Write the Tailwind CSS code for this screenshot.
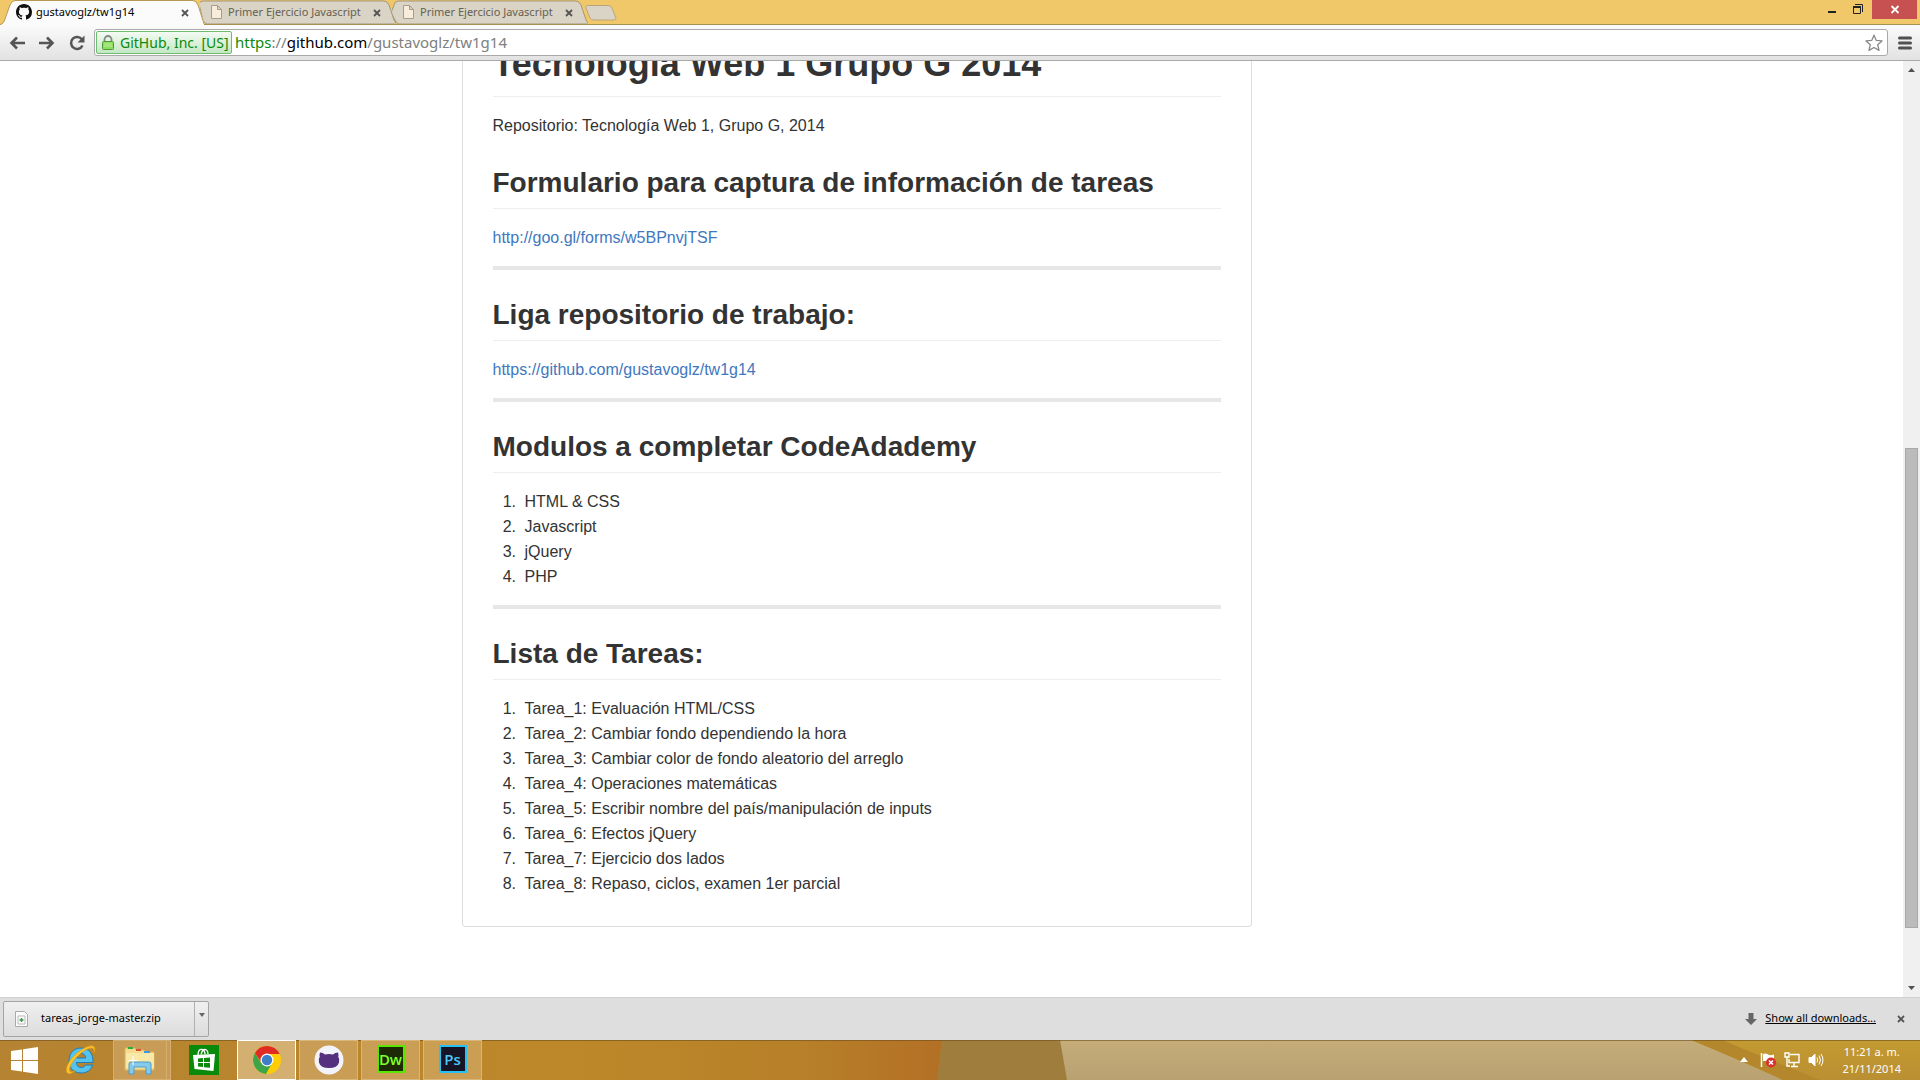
<!DOCTYPE html>
<html lang="es">
<head>
<meta charset="utf-8">
<title>gustavoglz/tw1g14</title>
<script src="https://cdn.jsdelivr.net/npm/@tailwindcss/browser@4"></script>
</head>
<body class="flex h-screen flex-col overflow-hidden bg-white font-['Noto_Sans',sans-serif]">

<!-- Window tabs -->
<header class="relative flex h-6 shrink-0 bg-[#f0c869] text-[11px] leading-6 text-[#665f52]">
  <nav class="flex" aria-label="Pestañas">
    <div class="relative z-20 h-[25px] w-[204px]">
      <svg class="absolute inset-0 h-full w-full" viewBox="0 0 204 25"><path d="M0 25C3 24 4 22 5 19L10 5Q12 1 15 1H193Q196 1 198 5L203 19Q204 23 208 25Z" fill="#fbfbfb"/><path d="M0 24.500C3 24 4 22 5 19L10 5Q12 .5 15 .5H193Q196 .5 198 5L204 24" fill="none" stroke="#b99a55"/></svg>
      <a href="#" class="relative flex items-center pl-4 text-black">
        <svg class="mr-1 h-4 w-4" viewBox="0 0 16 16"><path fill="#111" d="M8 0C3.580 0 0 3.580 0 8c0 3.540 2.290 6.530 5.470 7.590.4.070.55-.17.55-.38 0-.19-.01-.82-.01-1.490-2.010.37-2.530-.49-2.690-.94-.09-.23-.48-.94-.82-1.130-.28-.15-.68-.52-.01-.53.63-.01 1.080.58 1.230.82.72 1.210 1.870.87 2.330.66.070-.52.28-.87.51-1.070-1.780-.2-3.640-.89-3.640-3.950 0-.87.31-1.590.82-2.150-.08-.2-.36-1.020.08-2.120 0 0 .67-.21 2.200.82.64-.18 1.320-.27 2-.27s1.360.09 2 .27c1.530-1.040 2.200-.82 2.200-.82.44 1.100.16 1.920.08 2.120.51.56.82 1.270.82 2.150 0 3.070-1.870 3.750-3.650 3.950.29.25.54.73.54 1.480 0 1.070-.01 1.930-.01 2.200 0 .21.15.46.55.38A8.010 8.010 0 0 0 16 8c0-4.420-3.580-8-8-8z"/></svg>
        gustavoglz/tw1g14
      </a>
      <button class="absolute top-[9px] left-[181px]" aria-label="Cerrar"><svg class="h-2 w-2" viewBox="0 0 8 8"><path d="M1 1l6 6M7 1L1 7" stroke="#555" stroke-width="1.800"/></svg></button>
    </div>
    <div class="relative z-10 -ml-1 h-6 w-[196px]">
      <svg class="absolute inset-0 h-full w-full" viewBox="0 0 196 24"><path d="M-1 4Q0 1 3 1H184Q187 1 189 5L194 20Q195 23 198 24H7Q4 23 3 20Z" fill="#d9d4c6" stroke="#a4977a"/></svg>
      <a href="#" class="relative flex items-center pl-[11px]">
        <svg class="mr-[6px] h-[14px] w-[11px]" viewBox="0 0 11 14"><path d="M.5.5h6l4 4v9H.5zM6.500.5v4h4" fill="#f8eddb" stroke="#a99b85"/></svg>
        Primer Ejercicio Javascript
      </a>
      <button class="absolute top-[9px] left-[173px]" aria-label="Cerrar"><svg class="h-2 w-2" viewBox="0 0 8 8"><path d="M1 1l6 6M7 1L1 7" stroke="#555" stroke-width="1.800"/></svg></button>
    </div>
    <div class="relative -ml-1 h-6 w-[196px]">
      <svg class="absolute inset-0 h-full w-full" viewBox="0 0 196 24"><path d="M-1 13L2 5Q3 1 6 1H184Q187 1 189 5L194 20Q195 23 198 24H7Q4 23 3 20Z" fill="#d9d4c6" stroke="#a4977a"/></svg>
      <a href="#" class="relative flex items-center pl-[11px]">
        <svg class="mr-[6px] h-[14px] w-[11px]" viewBox="0 0 11 14"><path d="M.5.5h6l4 4v9H.5zM6.500.5v4h4" fill="#f8eddb" stroke="#a99b85"/></svg>
        Primer Ejercicio Javascript
      </a>
      <button class="absolute top-[9px] left-[173px]" aria-label="Cerrar"><svg class="h-2 w-2" viewBox="0 0 8 8"><path d="M1 1l6 6M7 1L1 7" stroke="#555" stroke-width="1.800"/></svg></button>
    </div>
    <button class="-ml-1 mt-[5px] self-start" aria-label="Nueva pestaña"><svg class="h-4 w-9" viewBox="0 0 36 16"><path d="M3 .5H24Q27 .5 28 3L32 13Q32 15 30 15H10Q7 15 6 13L2 3Q1 1 3 .5Z" fill="#d9d4c6" stroke="#b9a67c"/></svg></button>
  </nav>
  <div class="ml-auto flex items-start">
    <button class="w-6" aria-label="Minimizar"><svg class="h-5 w-6" viewBox="0 0 24 20"><path d="M8 11h8v2H8z" fill="#222"/></svg></button>
    <button class="ml-[2px] w-6" aria-label="Restaurar"><svg class="h-5 w-6" viewBox="0 0 24 20"><path d="M7 6h8v2H7z" fill="#222"/><path d="M7.500 6.500h7v7h-7zM9 4.500h7.500V12" fill="none" stroke="#222"/></svg></button>
    <button class="ml-[2px] h-[19px] w-[45px] bg-[#c75050]" aria-label="Cerrar ventana"><svg class="h-full w-full" viewBox="0 0 45 19"><path d="M19.500 6l7 7M26.500 6l-7 7" stroke="#fff" stroke-width="1.800"/></svg></button>
    <span class="w-[3px]"></span>
  </div>
</header>

<!-- Toolbar -->
<div class="relative z-10 flex h-[37px] shrink-0 items-center border-t border-b border-t-[#a8904f] border-b-[#a9a9a9] bg-linear-to-b from-[#fbfbfb] to-[#e2e2e2] pl-[9px] pr-2">
  <div class="flex gap-[14px] text-[#555]">
    <button aria-label="Atrás"><svg class="h-4 w-4" viewBox="0 0 16 16" fill="none" stroke="currentColor" stroke-width="2.600"><path d="M16 8H3M8 2.500L2.500 8 8 13.500"/></svg></button>
    <button aria-label="Adelante"><svg class="h-4 w-4" viewBox="0 0 16 16" fill="none" stroke="currentColor" stroke-width="2.600"><path d="M0 8h13M8 2.500L13.500 8 8 13.500"/></svg></button>
    <button aria-label="Recargar"><svg class="h-4 w-4" viewBox="0 0 16 16"><path d="M13 4.500A6 6 0 1 0 13.500 10.500" fill="none" stroke="currentColor" stroke-width="2.500"/><path d="M15.500.5v7h-7z" fill="currentColor"/></svg></button>
  </div>
  <div class="ml-[9px] flex h-[27px] flex-1 items-center rounded-[3px] border border-[#aaa] bg-white pr-1 pl-px text-[15px]">
    <button class="flex h-[23px] w-[136px] items-center gap-[6px] rounded-[2px] border border-[#6fbb6f] bg-linear-to-b from-[#f3fbf3] to-[#c4e8c4] pl-[5px] whitespace-nowrap text-[14px] text-[#0b8a0b]">
      <svg class="h-4 w-3 shrink-0" viewBox="0 0 12 16"><path d="M2.500 7V4.500a3.500 3.500 0 0 1 7 0V7" fill="none" stroke="#888" stroke-width="1.800"/><rect x=".5" y="6.500" width="11" height="8" rx="1" fill="#8fdc60" stroke="#4d9c35"/><path d="M2 9h8M2 11h8" stroke="#b9ef96"/></svg>
      GitHub, Inc. [US]
    </button>
    <p class="ml-[3px] flex-1 text-[#808080]"><span class="text-[#0b8a0b]">https</span>://<span class="text-black">github.com</span>/gustavoglz/tw1g14</p>
    <button aria-label="Añadir a marcadores"><svg class="h-[18px] w-[18px]" viewBox="0 0 18 18"><path d="M9 1.200l2.300 5.200 5.700.5-4.300 3.800 1.300 5.700L9 13.500l-5 2.900 1.300-5.700L1 6.900l5.700-.5z" fill="#fff" stroke="#888" stroke-width="1.300" stroke-linejoin="round"/></svg></button>
  </div>
  <button class="ml-[10px]" aria-label="Menú"><svg class="h-[14px] w-[14px]" viewBox="0 0 14 14"><path d="M1.500 2h11M1.500 7h11M1.500 12h11" stroke="#505050" stroke-width="3" stroke-linecap="round"/></svg></button>
</div>

<!-- Page -->
<div class="flex min-h-0 flex-1">
  <main class="min-w-0 flex-1 overflow-hidden font-['Liberation_Sans',Arial,sans-serif] text-[16px] leading-[25px] text-[#333]">
    <div class="mx-auto max-w-[980px]">
      <article class="-mt-[50px] mr-[190px] rounded-[3px] border border-[#ddd] p-[30px]">
        <h1 class="mb-4 border-b border-[#eee] pb-[11px] text-[36px] leading-[43px] font-bold">Tecnología Web 1 Grupo G 2014</h1>
        <p>Repositorio: Tecnología Web 1, Grupo G, 2014</p>
        <h2 class="mt-7 mb-4 border-b border-[#eee] pb-2 text-[28px] leading-[34px] font-bold">Formulario para captura de información de tareas</h2>
        <p><a href="http://goo.gl/forms/w5BPnvjTSF" class="text-[#4078c0]">http://goo.gl/forms/w5BPnvjTSF</a></p>
        <hr class="my-4 h-1 border-0 bg-[#e7e7e7]">
        <h2 class="mt-7 mb-4 border-b border-[#eee] pb-2 text-[28px] leading-[34px] font-bold">Liga repositorio de trabajo:</h2>
        <p><a href="https://github.com/gustavoglz/tw1g14" class="text-[#4078c0]">https://github.com/gustavoglz/tw1g14</a></p>
        <hr class="my-4 h-1 border-0 bg-[#e7e7e7]">
        <h2 class="mt-7 mb-4 border-b border-[#eee] pb-2 text-[28px] leading-[34px] font-bold">Modulos a completar CodeAdademy</h2>
        <ol class="list-decimal pl-7 *:pl-1">
          <li>HTML &amp; CSS</li>
          <li>Javascript</li>
          <li>jQuery</li>
          <li>PHP</li>
        </ol>
        <hr class="my-4 h-1 border-0 bg-[#e7e7e7]">
        <h2 class="mt-7 mb-4 border-b border-[#eee] pb-2 text-[28px] leading-[34px] font-bold">Lista de Tareas:</h2>
        <ol class="list-decimal pl-7 *:pl-1">
          <li>Tarea_1: Evaluación HTML/CSS</li>
          <li>Tarea_2: Cambiar fondo dependiendo la hora</li>
          <li>Tarea_3: Cambiar color de fondo aleatorio del arreglo</li>
          <li>Tarea_4: Operaciones matemáticas</li>
          <li>Tarea_5: Escribir nombre del país/manipulación de inputs</li>
          <li>Tarea_6: Efectos jQuery</li>
          <li>Tarea_7: Ejercicio dos lados</li>
          <li>Tarea_8: Repaso, ciclos, examen 1er parcial</li>
        </ol>
      </article>
    </div>
  </main>
  <div class="flex w-[17px] shrink-0 flex-col items-center bg-[#f0f0f0]">
    <svg class="h-[17px] w-[17px] shrink-0" viewBox="0 0 17 17"><path d="M5 11l3.500-4 3.500 4z" fill="#505050"/></svg>
    <div class="flex-[371]"></div>
    <div class="w-[13px] flex-[479] border border-[#a8a8a8] bg-[#bbb]"></div>
    <div class="flex-[52]"></div>
    <svg class="h-[17px] w-[17px] shrink-0" viewBox="0 0 17 17"><path d="M5 6l3.500 4L12 6z" fill="#505050"/></svg>
  </div>
</div>

<!-- Downloads shelf -->
<div class="flex h-[43px] shrink-0 items-center border-t border-[#d0d0d0] bg-[#dedede] pr-[15px] pb-px pl-[3px] text-[11px] text-black">
  <div class="flex h-9 w-[206px] rounded-[2px] border border-[#a5a5a5] bg-linear-to-b from-[#f0f0f0] to-[#dcdcdc]">
    <button class="flex flex-1 items-center pl-[11px]">
      <svg class="mr-[13px] h-4 w-[13px]" viewBox="0 0 13 16"><path d="M.5.500h9l3 3v12H.5z" fill="#fafafa" stroke="#aaa"/><path d="M3 5h7v8H3z" fill="none" stroke="#bbb"/><path d="M6.500 7v4M4.500 9h4" stroke="#3a9c4a" stroke-width="1.500"/></svg>
      tareas_jorge-master.zip
    </button>
    <button class="flex w-[14px] items-start justify-center border-l border-[#b0b0b0] pt-[11px]" aria-label="Opciones"><svg class="h-1 w-[6px]" viewBox="0 0 6 4"><path d="M0 0h6L3 4z" fill="#666"/></svg></button>
  </div>
  <svg class="mr-2 ml-auto h-3 w-3" viewBox="0 0 12 12"><path d="M3.500 0h5v6H12l-6 6-6-6h3.500z" fill="#666"/></svg>
  <a href="#" class="underline">Show all downloads...</a>
  <button class="ml-[21px]" aria-label="Cerrar"><svg class="h-2 w-2" viewBox="0 0 8 8"><path d="M1 1l6 6M7 1L1 7" stroke="#555" stroke-width="1.800"/></svg></button>
</div>

<!-- Taskbar -->
<footer class="relative flex h-10 shrink-0 overflow-hidden bg-[#b98229]">
  <svg class="absolute inset-0 h-full w-full" viewBox="0 0 1920 40" preserveAspectRatio="none">
    <defs>
      <linearGradient id="a"><stop offset="0" stop-color="#b58332"/><stop offset=".6" stop-color="#bd8829"/><stop offset=".85" stop-color="#b78029"/><stop offset="1" stop-color="#b37025"/></linearGradient>
      <linearGradient id="b" x2="0" y2="1"><stop stop-color="#c4ad79"/><stop offset="1" stop-color="#b9a172"/></linearGradient>
      <linearGradient id="c" x2="0" y2="1"><stop stop-color="#c49a31"/><stop offset="1" stop-color="#b98f33"/></linearGradient>
    </defs>
    <path d="M0 0H942L937 40H0z" fill="url(#a)"/>
    <path d="M942 0h119l6 40H937z" fill="#9e7d3d"/>
    <path d="M1060 0h860v40H1067z" fill="url(#b)"/>
    <path d="M1691 0H1920V40H1783Q1740 20 1691 0z" fill="url(#c)"/>
    <path d="M1691 0H1722Q1770 20 1820 40H1783Q1740 20 1691 0z" fill="#b5872c"/>
    <path d="M0 .5H1920" stroke="#6d4f1c" stroke-opacity=".6"/>
  </svg>
  <div class="relative flex flex-1 items-stretch">
    <button class="flex w-12 items-center justify-center" aria-label="Inicio"><svg class="h-[27px] w-[27px]" viewBox="0 0 27 27"><path d="M0 4l11-1.500V13H0zM12 2.300L27 0v13H12zM0 14h11v10.500L0 23zM12 14h15v13l-15-2.300z" fill="#fff"/></svg></button>
    <button class="flex w-[65px] items-center justify-center" aria-label="Internet Explorer"><svg class="h-8 w-8" viewBox="0 0 32 32"><path d="M16 4C8.500 4 4 9.500 4 17s5 12 12.500 12c5.500 0 9.500-3 11-8h-7c-1 1.700-2.300 2.500-4.200 2.500-3 0-4.800-2-4.900-5H28C28.500 10 24 4 16 4zM11.500 14c.3-2.800 2-4.500 4.700-4.500s4.300 1.700 4.500 4.500z" fill="#55c3ee" stroke="#1c7fb8"/><path d="M29 9c1-3 1.500-6-1-7C24 .5 14 6 7 14 1 21 0 28 3 29.500c2 1 5-1 7-2.500-3 1-5.500 1.500-5.500-1C4.500 22 9 15 15 10 21 5 26 3 28 4.500c1 .8 1.200 2.500 1 4.500z" fill="#f9c52e" stroke="#dc9a12" stroke-width=".7"/></svg></button>
    <button class="flex w-[54px] items-center justify-center border border-[#d8b67a]/70 bg-[#e0c090]/40" aria-label="Explorador"><svg class="h-8 w-8" viewBox="0 0 32 32"><path d="M1 4h10l1 2h8l1 2h9v18H1z" fill="#f5dc8c" stroke="#d8b65e"/><path d="M4 3h5v2H4z" fill="#2dab3f"/><path d="M12 5h5v2h-5z" fill="#d94c3c"/><path d="M20 7h6v2h-6z" fill="#3a9be0"/><path d="M2 9h28v15H2z" fill="#f9e9a8"/><path d="M5 30V20q0-2 2-2h18q2 0 2 2v10h-5v-7H10v7z" fill="#86c9ea" stroke="#4b9cc9"/><path d="M9 12v9M4.500 16.500h9" stroke="#fff"/></svg></button>
    <span class="w-1 border-y border-r border-[#d8b67a]/70 bg-[#e0c090]/40"></span>
    <button class="flex w-[66px] items-center justify-center" aria-label="Tienda"><svg class="h-[30px] w-[30px]" viewBox="0 0 30 30"><path d="M0 0h30v30H0z" fill="#0a8a0a"/><path d="M4 10l22-1-1.500 17L5.500 24z" fill="#fff"/><path d="M9 10q0-6 4-5.500 3 .5 3 5M12 9.500q2-7 5.500-4.500Q19 6 19 9" fill="none" stroke="#fff" stroke-width="1.300"/><path d="M9 13.500l5-.5v4H9zM15 13l6-.5V17h-6zM9 18h5v4l-5-.5zM15 18h6v4.800l-6-.5z" fill="#0a8a0a"/></svg></button>
    <button class="mr-[3px] flex w-[59px] items-center justify-center border border-white bg-[#e5cda0]/60" aria-label="Chrome"><svg class="h-[30px] w-[30px]" viewBox="0 0 30 30"><circle cx="15" cy="15" r="14" fill="#ffcd05"/><path d="M2.900 8A14 14 0 0 0 14 29l6-11-5-3-6 3z" fill="#3ba548"/><path d="M2.900 8A14 14 0 0 1 27.700 9H14L9 17z" fill="#e02b24"/><circle cx="15" cy="15" r="6.500" fill="#fff"/><circle cx="15" cy="15" r="5.200" fill="#3b7fc9"/></svg></button>
    <button class="mr-[3px] flex w-[59px] items-center justify-center border border-[#d8b67a] bg-[#e0c090]/40" aria-label="GitHub"><svg class="h-[30px] w-[30px]" viewBox="0 0 30 30"><circle cx="15" cy="15" r="14.500" fill="#f3f3fb"/><path d="M6 7.500q3 .2 5 2 4-1 8 0 2-1.800 5-2 .8 2.500.3 4.500Q26 14 25 17.500 23.500 23 15 23T5 17.500Q4 14 5.700 12 5.200 10 6 7.500z" fill="#55307f"/></svg></button>
    <button class="mr-[3px] flex w-[59px] items-start justify-center border border-[#d8b67a] bg-[#e0c090]/40 pt-1" aria-label="Dreamweaver"><span class="flex h-7 w-7 items-center justify-center border-2 border-[#5be600] bg-[#1d2a05] font-['Open_Sans',sans-serif] text-[15px] leading-6 font-semibold text-[#7dff2a]">Dw</span></button>
    <button class="flex w-[59px] items-start justify-center border border-[#d8b67a] bg-[#e0c090]/40 pt-1" aria-label="Photoshop"><span class="flex h-7 w-7 items-center justify-center border-2 border-[#26c0f5] bg-[#171525] font-['Open_Sans',sans-serif] text-[15px] leading-6 font-semibold text-[#4cc9f5]">Ps</span></button>
  </div>
  <div class="relative flex items-center pr-[19px] text-white">
    <svg class="mr-3 h-[6px] w-2" viewBox="0 0 8 6"><path d="M0 5l4-5 4 5z" fill="#fff"/></svg>
    <svg class="mr-2 h-4 w-4" viewBox="0 0 16 16"><path d="M1.500 1v14" stroke="#fff" stroke-width="1.500"/><path d="M3 2q3-1 5 .5t6 0V9H3z" fill="#fff"/><circle cx="11" cy="10.500" r="5" fill="#d9302c"/><path d="M9 8.500l4 4M13 8.500l-4 4" stroke="#fff" stroke-width="1.500"/></svg>
    <svg class="mr-2 h-4 w-4" viewBox="0 0 16 16" fill="none" stroke="#fff" stroke-width="1.400"><path d="M6 2.500h9v8H5V7M7 14.500h7M10 11v3M1 1h4v4H1zM3 5v9h3"/></svg>
    <svg class="mr-[18px] h-4 w-4" viewBox="0 0 16 16" fill="none" stroke="#fff"><path d="M1 5.500h2.500L7 2v12l-3.500-3.500H1z" fill="#fff"/><path d="M9 5.500q1.500 2.500 0 5M11 3.500q3 4.500 0 9M13 2q4 6 0 12"/></svg>
    <div class="text-center text-[11px] leading-[17px]"><p>11:21 a. m.</p><p>21/11/2014</p></div>
  </div>
</footer>
</body>
</html>
